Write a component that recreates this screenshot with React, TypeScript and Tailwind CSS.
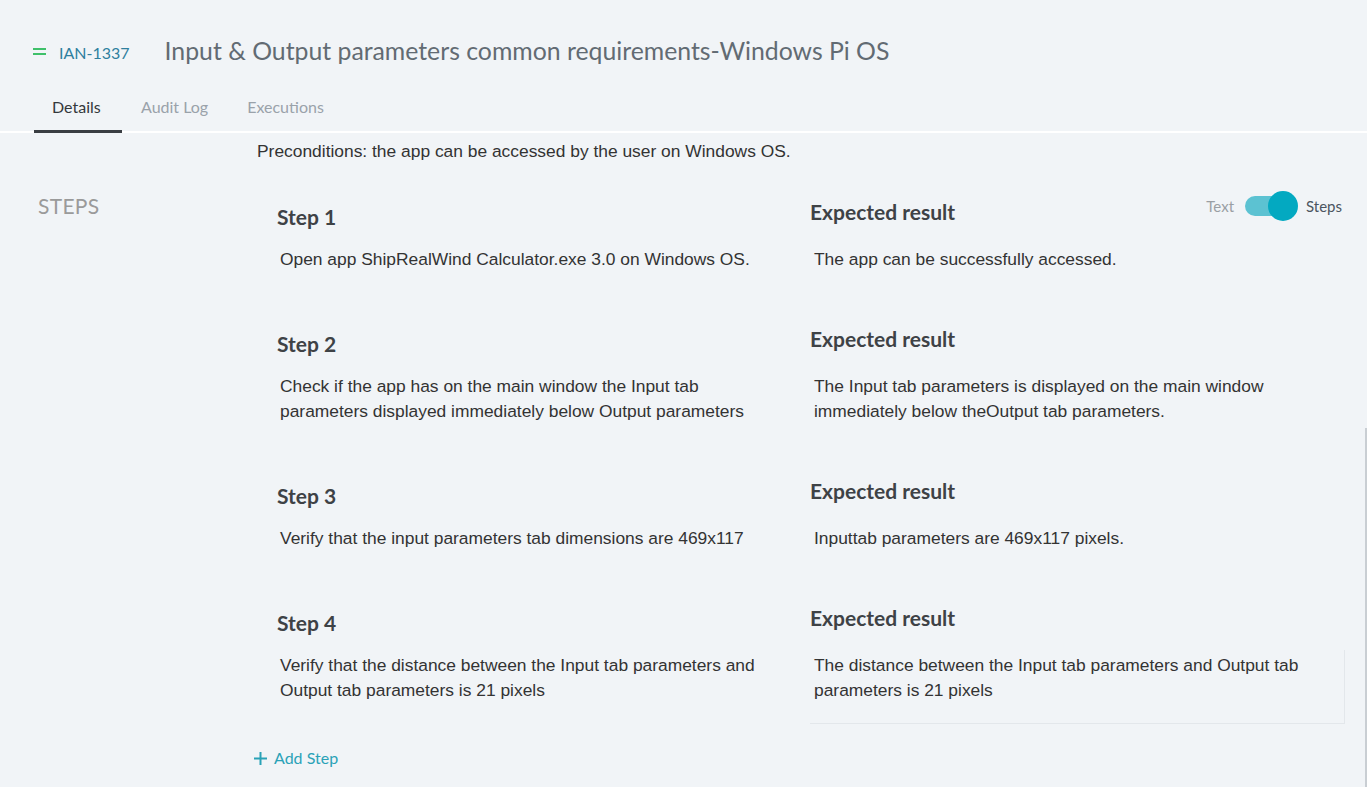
import React from 'react';

const lato = "font-['Lato','Noto_Sans',sans-serif]";
const arial = "font-['Liberation_Sans','Arial',sans-serif]";

interface Step {
  label: string;
  action: string[];
  result: string[];
}

const steps: Step[] = [
  {
    label: 'Step 1',
    action: ['Open app ShipRealWind Calculator.exe 3.0 on Windows OS.'],
    result: ['The app can be successfully accessed.'],
  },
  {
    label: 'Step 2',
    action: [
      'Check if the app has on the main window the Input tab',
      'parameters displayed immediately below Output parameters',
    ],
    result: ['The Input tab parameters is displayed on the main window', 'immediately below theOutput tab parameters.'],
  },
  {
    label: 'Step 3',
    action: ['Verify that the input parameters tab dimensions are 469x117'],
    result: ['Inputtab parameters are 469x117 pixels.'],
  },
  {
    label: 'Step 4',
    action: ['Verify that the distance between the Input tab parameters and', 'Output tab parameters is 21 pixels'],
    result: ['The distance between the Input tab parameters and Output tab', 'parameters is 21 pixels'],
  },
];

function ModeToggle() {
  return (
    <div className={`flex items-center ${lato} text-[15px] -mt-[12px] mr-[3px]`}>
      <span className="text-[#9a9fa4] mr-[11px]">Text</span>
      <div className="relative w-[47px] h-[20px] rounded-full bg-[#5cc2d2]">
        <div className="absolute right-[-6px] top-[-5px] w-[30px] h-[30px] rounded-full bg-[#03a9c1]"></div>
      </div>
      <span className="text-[#4b5560] ml-[14px]">Steps</span>
    </div>
  );
}

export default function App() {
  return (
    <div className="relative w-full h-[787px] overflow-hidden bg-[#f1f4f7]">
      {/* Header */}
      <div className="flex items-center pl-[33px] pt-[35px]">
        <div className="flex flex-col gap-[3px] w-[13px]">
          <div className="h-[2px] bg-[#3fc06a]"></div>
          <div className="h-[2px] bg-[#3fc06a]"></div>
        </div>
        <span className={`${lato} text-[16px] leading-[20px] text-[#2f7f9e] ml-[13px] mt-[3px]`}>IAN-1337</span>
        <h1 className={`${lato} text-[24.8px] leading-[32px] text-[#626b73] ml-[35px]`}>
          Input &amp; Output parameters common requirements-Windows Pi OS
        </h1>
      </div>

      {/* Tabs */}
      <div className="flex pl-[34px] mt-[30px] border-b-2 border-white">
        <div className={`${lato} text-[16px] leading-[20px] w-[88px] pl-[18px] pb-[13px] border-b-[3px] border-[#3a3e43] -mb-[2px] text-[#34383c]`}>
          Details
        </div>
        <div className={`${lato} text-[16px] leading-[20px] px-[19px] pb-[13px] text-[#9aa2aa]`}>Audit Log</div>
        <div className={`${lato} text-[16px] leading-[20px] pl-[20px] pr-[19px] pb-[13px] text-[#9aa2aa]`}>Executions</div>
      </div>

      {/* Preconditions */}
      <p className={`${arial} text-[17.4px] leading-[24px] text-[#333] pl-[257px] pt-[6px]`}>
        Preconditions: the app can be accessed by the user on Windows OS.
      </p>

      {/* Steps section */}
      <div className="flex mt-[35px]">
        <div className="w-[257px] pl-[38px] shrink-0 -mt-[6px]">
          <span className={`${lato} text-[21px] leading-[28px] text-[#9a9a9a] tracking-[0.3px]`}>STEPS</span>
        </div>
        <div className="flex-1 pl-[20px] pr-[22px]">
          {steps.map((s, i) => {
            const last = i === steps.length - 1;
            return (
              <div key={s.label} className={`grid grid-cols-[533px_1fr] ${last ? '' : 'pb-[53px]'}`}>
                <div className="pt-[5px]">
                  <div className={`${lato} font-bold text-[21px] leading-[28px] text-[#3e4246]`}>{s.label}</div>
                  <div className={`${arial} text-[17.4px] leading-[25px] text-[#333] pl-[3px] mt-[16px]`}>
                    {s.action.map((l) => (
                      <div key={l}>{l}</div>
                    ))}
                  </div>
                </div>
                <div>
                  <div className="flex items-center justify-between">
                    <span className={`${lato} font-bold text-[21px] leading-[28px] text-[#3e4246]`}>Expected result</span>
                    {i === 0 && <ModeToggle />}
                  </div>
                  <div
                    className={`${arial} text-[17.4px] leading-[25px] text-[#333] pl-[2px] ${
                      last ? 'mt-[18px] pt-[3px] pb-[20px] border-r border-b border-[#e3e7eb]' : 'mt-[21px]'
                    }`}
                  >
                    <div className="pl-[2px]">
                      {s.result.map((l) => (
                        <div key={l}>{l}</div>
                      ))}
                    </div>
                  </div>
                </div>
              </div>
            );
          })}

          <button className={`flex items-center gap-[6px] -ml-[24px] mt-[24px] ${lato} text-[16px] leading-[20px] text-[#2aa2b7]`}>
            <svg width="15" height="15" viewBox="0 0 15 15" fill="none" stroke="#2aa2b7" strokeWidth="2">
              <path d="M7.5 1v13M1 7.5h13" />
            </svg>
            Add Step
          </button>
        </div>
      </div>

      {/* scrollbar edge */}
      <div className="absolute right-0 top-[428px] bottom-0 w-[2px] bg-[#c9ced3]"></div>
    </div>
  );
}
